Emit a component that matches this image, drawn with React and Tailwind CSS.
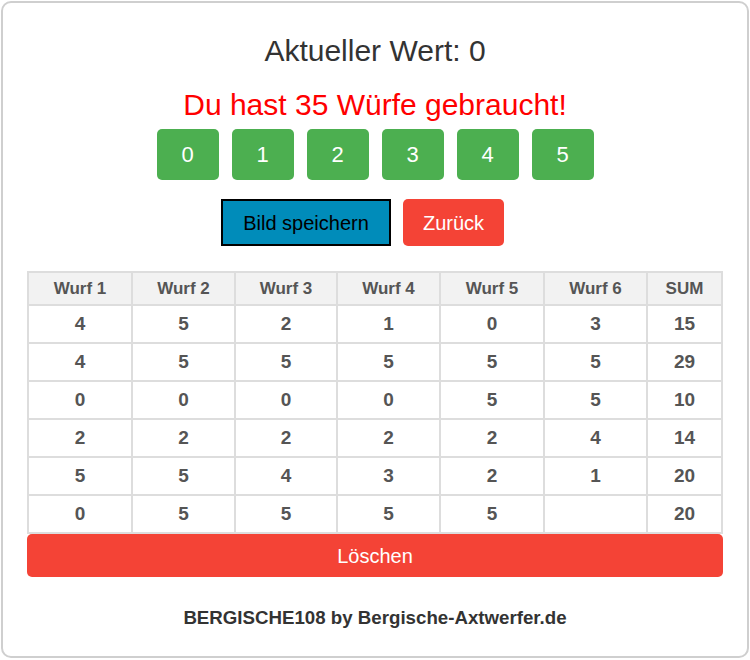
import React from 'react';

const rows = [
  ['4', '5', '2', '1', '0', '3', '15'],
  ['4', '5', '5', '5', '5', '5', '29'],
  ['0', '0', '0', '0', '5', '5', '10'],
  ['2', '2', '2', '2', '2', '4', '14'],
  ['5', '5', '4', '3', '2', '1', '20'],
  ['0', '5', '5', '5', '5', '', '20'],
];

const headers = ['Wurf 1', 'Wurf 2', 'Wurf 3', 'Wurf 4', 'Wurf 5', 'Wurf 6', 'SUM'];

export default function App() {
  return (
    <div className="min-h-screen bg-white font-['Liberation_Sans',Arial,sans-serif]">
      <div className="ml-px mt-px flex h-[657px] w-[748px] flex-col items-center rounded-[10px] border-2 border-[#cfcfcf] px-[24px] pt-[31px]">
        <h1 className="text-[30px] leading-[34px] text-[#333]">Aktueller Wert: 0</h1>
        <div className="mt-[20px] text-[30px] leading-[34px] text-[#ff0000]">Du hast 35 Würfe gebraucht!</div>

        <div className="mt-[7px] flex gap-[13px]">
          {[0, 1, 2, 3, 4, 5].map((n) => (
            <button
              key={n}
              type="button"
              className="flex h-[51px] w-[62px] items-center justify-center rounded-[5px] bg-[#4caf50] text-[22px] text-white"
            >
              {n}
            </button>
          ))}
        </div>

        <div className="mt-[19px] flex w-full justify-center gap-[12px] pr-[25px]">
          <button
            type="button"
            className="flex h-[47px] w-[170px] items-center justify-center border-2 border-black bg-[#008cba] text-[20px] text-black"
          >
            Bild speichern
          </button>
          <button
            type="button"
            className="flex h-[47px] w-[101px] items-center justify-center rounded-[5px] bg-[#f44336] text-[20px] text-white"
          >
            Zurück
          </button>
        </div>

        <div className="mt-[25px] grid w-[696px] grid-cols-[102px_101px_100px_101px_102px_101px_73px] gap-[2px] bg-[#ddd] p-[2px] font-bold text-[#555]">
          {headers.map((h) => (
            <div key={h} className="flex h-[31px] items-center justify-center bg-[#f2f2f2] pt-px text-[17px]">
              {h}
            </div>
          ))}
          {rows.map((row, i) =>
            row.map((v, j) => (
              <div key={`${i}-${j}`} className="flex h-[36px] items-center justify-center bg-white pt-px text-[19px]">
                {v}
              </div>
            ))
          )}
        </div>

        <button
          type="button"
          className="flex h-[43px] w-[696px] items-center justify-center rounded-[5px] bg-[#f44336] text-[20px] text-white"
        >
          Löschen
        </button>

        <div className="mt-[30px] text-[18.7px] font-bold leading-[22px] text-[#333]">
          BERGISCHE108 by Bergische-Axtwerfer.de
        </div>
      </div>
    </div>
  );
}
